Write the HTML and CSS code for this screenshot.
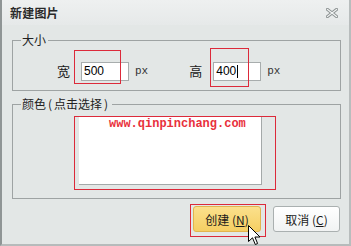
FILE: index.html
```html
<!DOCTYPE html>
<html>
<head>
<meta charset="utf-8">
<link rel="stylesheet" href="styles.css">
</head>
<body>
<div class="dialog">
  <div class="titlebar">
    <span class="title">新建图片</span>
    <svg class="close" width="12" height="10" viewBox="0 0 12 10">
      <path d="M1.5 1.5 L10.5 8.5 M10.5 1.5 L1.5 8.5" stroke="#8e9494" stroke-width="3.2" stroke-linecap="square"/>
      <path d="M1.5 1.5 L10.5 8.5 M10.5 1.5 L1.5 8.5" stroke="#f4f6f6" stroke-width="1.2" stroke-linecap="square"/>
    </svg>
  </div>
  <div class="content">
    <fieldset class="group size">
      <legend>大小</legend>
      <div class="size-row">
        <span class="lbl w-lbl">宽</span>
        <span class="input">500</span>
        <span class="unit">px</span>
        <span class="lbl h-lbl">高</span>
        <span class="input">400<i class="caret"></i></span>
        <span class="unit">px</span>
      </div>
    </fieldset>
    <fieldset class="group color">
      <legend>颜色<span class="paren">(</span>点击选择<span class="paren">)</span></legend>
      <div class="swatch"></div>
    </fieldset>
    <div class="buttons">
      <button class="btn primary">创建 (<u>N</u>)</button>
      <button class="btn">取消 (<u>C</u>)</button>
    </div>
  </div>
  <div class="mark m1"></div>
  <div class="mark m2"></div>
  <div class="mark m3"></div>
  <div class="mark m4"></div>
  <div class="watermark">www.qinpinchang.com</div>
  <svg class="cursor" width="13" height="21" viewBox="0 0 13 21">
    <path d="M0.5 0.5 L0.5 16.5 L4.5 12.8 L7.3 19.5 L9.6 18.5 L6.9 12 L12 12 Z" fill="#fff" stroke="#000" stroke-width="1" stroke-linejoin="miter"/>
  </svg>
</div>
</body>
</html>
```

FILE: styles.css
```css
* { box-sizing: border-box; }
html, body { margin: 0; padding: 0; }
body {
  width: 351px;
  height: 246px;
  overflow: hidden;
  background: #e3e7e6;
  font-family: "Noto Sans CJK SC", "Liberation Sans", sans-serif;
  font-size: 12px;
  color: #1a1a1a;
}
.dialog {
  position: relative;
  width: 351px;
  height: 246px;
  border-left: 2px solid #8f9595;
  border-right: 2px solid #b8bdbd;
  border-bottom: 2px solid #b6bbbb;
  background: #e3e7e6;
}
.titlebar {
  height: 25px;
  display: flex;
  align-items: center;
  justify-content: space-between;
  padding: 0 11px 0 8px;
  background: linear-gradient(#eef0f0, #e6e9e9);
}
.title {
  font-weight: bold;
  font-size: 12px;
  line-height: 14px;
  color: #2a2a2a;
  letter-spacing: 0.2px;
}
.close { display: block; }
.content {
  padding: 7px 8px 0 10px;
}
.group {
  margin: 0;
  padding: 0;
  border: 1px solid #9ea3a3;
  min-width: 0;
}
.group legend {
  margin-left: 8px;
  padding: 0 2px 0 1px;
  line-height: 16px;
  font-size: 12px;
  color: #222;
}
.paren { margin: 0 2px; }
.size-row {
  display: flex;
  align-items: center;
  height: 20px;
  margin: 13px 0 9px;
}
.lbl { font-size: 13px; line-height: 16px; }
.w-lbl { margin-left: 44px; margin-right: 11px; }
.h-lbl { margin-left: 41px; margin-right: 11px; }
.input {
  width: 48px;
  height: 19px;
  background: #fff;
  border: 1px solid #a8adad;
  font-family: "Liberation Sans", sans-serif;
  font-size: 12px;
  line-height: 17px;
  padding-left: 2px;
  color: #000;
  display: flex;
  align-items: center;
}
.caret {
  display: inline-block;
  width: 1px;
  height: 13px;
  background: #000;
  margin-left: 1px;
}
.unit {
  font-family: "Liberation Mono", monospace;
  font-size: 11px;
  margin-left: 6px;
  color: #333;
}
.color { margin-top: 5px; }
.swatch {
  margin: 5px 0 13px 66px;
  width: 183px;
  height: 68px;
  background: #fff;
  border-right: 1px solid #a4a9a9;
  border-bottom: 1px solid #a4a9a9;
}
.buttons {
  display: flex;
  justify-content: flex-end;
  gap: 12px;
  margin-top: 7px;
  padding-right: 1px;
}
.btn {
  width: 67px;
  height: 26px;
  border: 1px solid #aab0b0;
  border-radius: 3px;
  background: linear-gradient(#ffffff, #f1f3f3);
  font-family: "Noto Sans CJK SC", sans-serif;
  font-size: 12px;
  color: #1a1a1a;
  padding: 0;
}
.btn u { text-decoration: underline; }
.btn.primary {
  width: 68px;
  background: linear-gradient(#fbe08c, #f5cf63);
  border-color: #e2b44e;
}
.mark {
  position: absolute;
  border: 1.5px solid #dc2a3a;
  pointer-events: none;
}
.m1 { left: 72px; top: 50px; width: 47px; height: 34px; }
.m2 { left: 208px; top: 48px; width: 39px; height: 39px; }
.m3 { left: 72px; top: 116px; width: 202px; height: 74px; }
.m4 { left: 188px; top: 204px; width: 76px; height: 33px; }
.watermark {
  position: absolute;
  left: 107px;
  top: 117px;
  font-family: "Liberation Mono", monospace;
  font-weight: bold;
  font-size: 12px;
  line-height: 14px;
  color: #e8303c;
}
.cursor {
  position: absolute;
  left: 246px;
  top: 225px;
}
```
